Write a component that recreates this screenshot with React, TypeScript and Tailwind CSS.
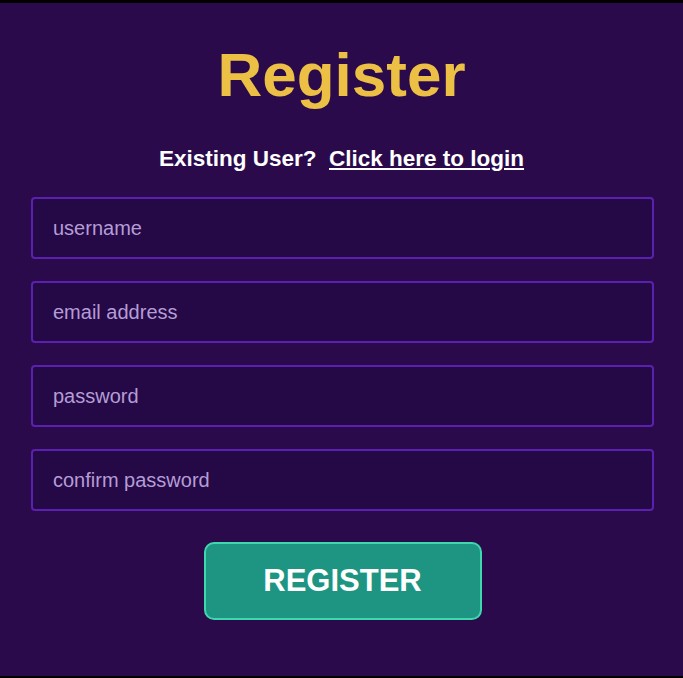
import React, { useState } from 'react';

const fields = [
  { name: 'username', placeholder: 'username', type: 'text' },
  { name: 'email', placeholder: 'email address', type: 'email' },
  { name: 'password', placeholder: 'password', type: 'password' },
  { name: 'confirm', placeholder: 'confirm password', type: 'password' },
];

export default function App(): React.ReactElement {
  const [values, setValues] = useState<Record<string, string>>({});

  return (
    <div className="bg-black pt-[3px] pb-[2px] font-['Liberation_Sans',Arial,sans-serif]">
      <div className="h-[673px] bg-[#2a0a4b] flex flex-col items-center">
        <h1 className="mt-[37px] text-[62px] leading-[70px] font-bold text-[#ecbf45]">Register</h1>
        <p className="mt-[34px] text-[22.5px] leading-[30px] font-bold text-white">
          Existing User?&nbsp;{' '}
          <a href="#" className="underline">Click here to login</a>
        </p>
        <form className="mt-[23px] w-full pl-[31px] pr-[29px] flex flex-col gap-[22px]" onSubmit={(e) => e.preventDefault()}>
          {fields.map((f) => (
            <input
              key={f.name}
              type={f.type}
              placeholder={f.placeholder}
              value={values[f.name] || ''}
              onChange={(e) => setValues({ ...values, [f.name]: e.target.value })}
              className="h-[62px] w-full rounded-[4px] border-2 border-[#5a21b0] bg-[#250846] px-[20px] text-[20px] text-white placeholder:text-[#b49dd6] outline-none"
            />
          ))}
          <div className="flex justify-center mt-[9px]">
            <button
              type="submit"
              className="w-[278px] h-[78px] rounded-[10px] border-2 border-[#3fd8ae] bg-[#1e9582] text-[31px] font-bold text-white"
            >
              REGISTER
            </button>
          </div>
        </form>
      </div>
    </div>
  );
}
